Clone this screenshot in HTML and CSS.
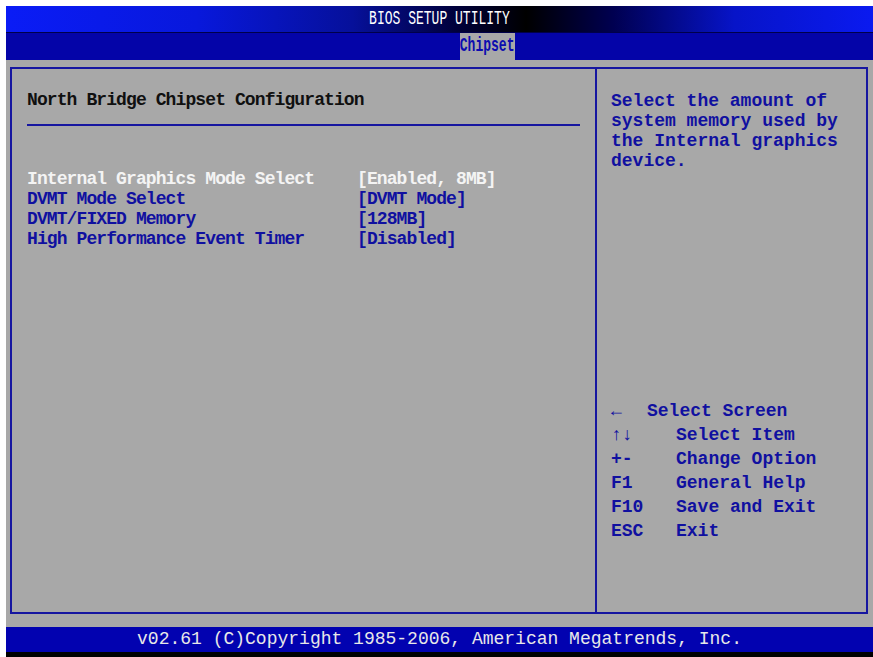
FILE: index.html
```html
<!DOCTYPE html>
<html lang="en">
<head>
  <meta charset="UTF-8">
  <title>BIOS SETUP UTILITY</title>
  <link rel="stylesheet" href="styles.css">
</head>
<body>
<div class="screen">
  <div class="titlebar"><span class="narrow">BIOS SETUP UTILITY</span></div>
  <div class="tabbar">
    <div class="tab active"><span class="narrow">Chipset</span></div>
  </div>

  <div class="content">
    <div class="panel">
      <!-- settings -->
      <div class="main">
        <div class="heading">North Bridge Chipset Configuration</div>
        <div class="rule"></div>
        <div class="items">
          <div class="item selected"><span class="label">Internal Graphics Mode Select</span><span class="value">[Enabled, 8MB]</span></div>
          <div class="item"><span class="label">DVMT Mode Select</span><span class="value">[DVMT Mode]</span></div>
          <div class="item"><span class="label">DVMT/FIXED Memory</span><span class="value">[128MB]</span></div>
          <div class="item"><span class="label">High Performance Event Timer</span><span class="value">[Disabled]</span></div>
        </div>
      </div>

      <!-- help -->
      <div class="side">
        <div class="help">
          <div>Select the amount of</div>
          <div>system memory used by</div>
          <div>the Internal graphics</div>
          <div>device.</div>
        </div>
        <div class="keys">
          <div class="key-row"><span class="key">&larr;</span><span class="desc">Select Screen</span></div>
          <div class="key-row"><span class="key">&uarr;&darr;</span><span class="desc indent">Select Item</span></div>
          <div class="key-row"><span class="key">+-</span><span class="desc indent">Change Option</span></div>
          <div class="key-row"><span class="key">F1</span><span class="desc indent">General Help</span></div>
          <div class="key-row"><span class="key">F10</span><span class="desc indent">Save and Exit</span></div>
          <div class="key-row"><span class="key">ESC</span><span class="desc indent">Exit</span></div>
        </div>
      </div>
    </div>
  </div>

  <div class="footer">v02.61 (C)Copyright 1985-2006, American Megatrends, Inc.</div>
  <div class="bottom"></div>
</div>
</body>
</html>
```

FILE: styles.css
```css
* {
  margin: 0;
  padding: 0;
  box-sizing: border-box;
}

body {
  background: #ffffff;
  font-family: "Liberation Mono", "DejaVu Sans Mono", monospace;
}

.screen {
  margin: 6px 0 0 6px;
  width: 867px;
  height: 651px;
  display: flex;
  flex-direction: column;
  background: #a8a8a8;
}

.narrow {
  display: inline-block;
  white-space: nowrap;
  transform: scaleX(0.62);
}

.titlebar {
  height: 27px;
  background: linear-gradient(90deg, #0a1cf6 0%, #0818dc 22%, #06109a 40%, #00003a 52%, #000000 60%, #000050 70%, #0714c8 84%, #0a1af0 100%);
  border-bottom: 1px solid #00004a;
  color: #ffffff;
  font-size: 21px;
  line-height: 26px;
  text-align: center;
}

.tabbar {
  height: 27px;
  background: #0404a8;
  display: flex;
  padding-left: 454px;
}

.tab {
  width: 55px;
  height: 27px;
  display: flex;
  justify-content: center;
  font-size: 21px;
  font-weight: bold;
  line-height: 26px;
  color: #0c0cb0;
}

.tab.active {
  background: #a8a8a8;
}

.content {
  flex: 1;
  padding: 7px 5px 13px 4px;
}

.panel {
  height: 100%;
  border: 2px solid #1616a0;
  display: grid;
  grid-template-columns: 585px 1fr;
  font-size: 18px;
  font-weight: bold;
  letter-spacing: -0.9px;
  line-height: 20px;
}

.main {
  border-right: 2px solid #1616a0;
  padding: 21px 0 0 15px;
}

.heading {
  color: #101010;
}

.rule {
  width: 553px;
  height: 2px;
  margin-top: 14px;
  background: #1616a0;
}

.items {
  margin-top: 43px;
}

.item {
  display: flex;
  color: #1010a0;
}

.item.selected {
  color: #f4f4f4;
}

.label {
  width: 330px;
}

.side {
  display: flex;
  flex-direction: column;
  padding: 22px 0 69px 14px;
  color: #1010a0;
  letter-spacing: 0;
}

.keys {
  margin-top: auto;
}

.key-row {
  display: flex;
  height: 24px;
  line-height: 24px;
}

.key {
  width: 36px;
}

.desc.indent {
  padding-left: 29px;
}

.footer {
  height: 25px;
  background: #0202b0;
  color: #e8e8e8;
  font-size: 18px;
  line-height: 25px;
  text-align: center;
}

.bottom {
  height: 5px;
  background: #000000;
}
```
